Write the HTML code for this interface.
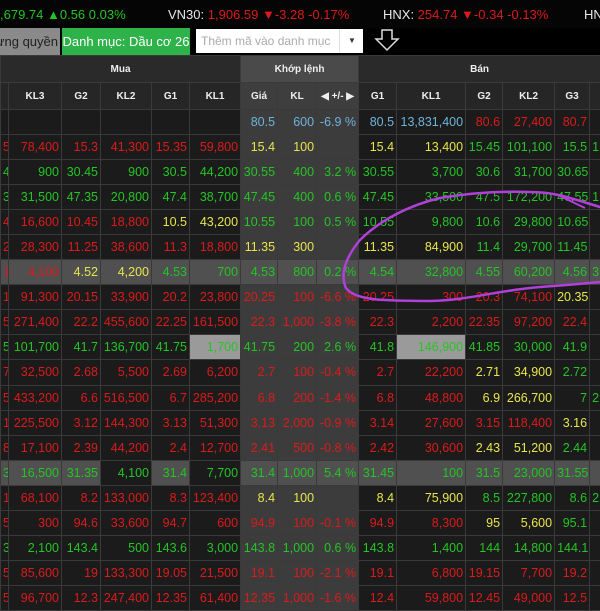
<!DOCTYPE html>
<html><head><meta charset="utf-8"><style>
*{margin:0;padding:0;box-sizing:border-box}
body{width:600px;height:600px;overflow:hidden;background:#000;font-family:"Liberation Sans",Arial,sans-serif;position:relative}
.top{position:absolute;left:0;top:0;width:600px;height:28px;background:#050505;font-size:13px;line-height:30px;white-space:nowrap}
.top span{position:absolute}
.g{color:#25c425}.r{color:#dd1a1a}.y{color:#e8e54c}.b{color:#6fb3dc}.w{color:#e8e8e8}
.bar{position:absolute;top:28px;left:0;width:600px;height:28px;background:#000}
.btn1{position:absolute;left:0;top:0;width:60px;height:27px;background:#8a8a8a;color:#222;font-size:13px;line-height:27px;white-space:nowrap;overflow:hidden}
.btn1 span{position:absolute;right:2px;top:0}
.btn2{position:absolute;left:62px;top:0;width:128px;height:27px;background:#2eb24a;color:#fff;font-size:13px;line-height:27px;text-align:center;white-space:nowrap}
.inp{position:absolute;left:196px;top:1px;width:167px;height:24px;background:#fff;color:#aaa;font-size:12px;line-height:24px;padding-left:5px;white-space:nowrap}
.inp .sep{position:absolute;left:143px;top:0;width:1px;height:24px;background:#ddd}
.inp .dd{position:absolute;left:152px;top:0;color:#333;font-size:8px}
table{position:absolute;left:0;top:55px;border-collapse:collapse;table-layout:fixed;width:600px}
td{border:1px solid #3a3a3a;height:25.05px;font-size:12.5px;text-align:right;padding:0 2px;white-space:nowrap;overflow:hidden;background:#1b1b1b}
tr.h1 td{height:27px;background:#2a2a2a;color:#eee;font-weight:bold;font-size:10px;text-align:center}
tr.h2 td{height:27px;background:#262626;color:#eee;font-weight:bold;font-size:10px;text-align:center}
td.k{background:#3c3c3c}
tr.h1 td.k{background:#4a4a4a}
tr.h2 td.k{background:#3e3e3e}
tr.hl td{background:#505050}
td.gc{background:#9a9a9a!important}
td.dk{background:#1b1b1b!important}
</style></head><body>
<div class="top">
<span class="g" style="left:0">,679.74 ▲0.56 0.03%</span>
<span style="left:168px"><span class="w" style="position:static">VN30: </span><span class="r" style="position:static">1,906.59 ▼-3.28 -0.17%</span></span>
<span style="left:383px"><span class="w" style="position:static">HNX: </span><span class="r" style="position:static">254.74 ▼-0.34 -0.13%</span></span>
<span class="w" style="left:584px">HN</span>
</div>
<div class="bar">
<div class="btn1"><span>ừng quyền</span></div>
<div class="btn2">Danh mục: Dầu cơ 26</div>
<div class="inp">Thêm mã vào danh mục<div class="sep"></div><div class="dd">▼</div></div>
<svg style="position:absolute;left:374px;top:0px" width="26" height="24" viewBox="0 0 26 24"><path d="M8 2h10v9h6l-11 11L2 11h6z" fill="none" stroke="#ddd" stroke-width="1.5"/></svg>
</div>
<table>
<colgroup><col style="width:8px"><col style="width:53px"><col style="width:39px"><col style="width:51px"><col style="width:38px"><col style="width:51px"><col style="width:37px"><col style="width:39px"><col style="width:42px"><col style="width:38px"><col style="width:69px"><col style="width:37px"><col style="width:52px"><col style="width:35px"><col style="width:11px"></colgroup>
<tr class="h1"><td colspan="6">Mua</td><td class="k" colspan="3">Khớp lệnh</td><td colspan="6">Bán</td></tr>
<tr class="h2"><td></td><td>KL3</td><td>G2</td><td>KL2</td><td>G1</td><td>KL1</td><td class="k">Giá</td><td class="k">KL</td><td class="k">◀ +/- ▶</td><td>G1</td><td>KL1</td><td>G2</td><td>KL2</td><td>G3</td><td></td></tr>
<tr><td></td><td></td><td></td><td></td><td></td><td></td><td class="k b">80.5</td><td class="k b">600</td><td class="k b">-6.9 %</td><td class="b">80.5</td><td class="b">13,831,400</td><td class="r">80.6</td><td class="r">27,400</td><td class="r">80.7</td><td></td></tr>
<tr><td class="r">5</td><td class="r">78,400</td><td class="r">15.3</td><td class="r">41,300</td><td class="r">15.35</td><td class="r">59,800</td><td class="k y">15.4</td><td class="k y">100</td><td class="k"></td><td class="y">15.4</td><td class="y">13,400</td><td class="g">15.45</td><td class="g">101,100</td><td class="g">15.5</td><td class="g">1</td></tr>
<tr class="g"><td>4</td><td>900</td><td>30.45</td><td>900</td><td>30.5</td><td>44,200</td><td class="k">30.55</td><td class="k">400</td><td class="k">3.2 %</td><td>30.55</td><td>3,700</td><td>30.6</td><td>31,700</td><td>30.65</td><td></td></tr>
<tr class="g"><td>3</td><td>31,500</td><td>47.35</td><td>20,800</td><td>47.4</td><td>38,700</td><td class="k">47.45</td><td class="k">400</td><td class="k">0.6 %</td><td>47.45</td><td>33,500</td><td>47.5</td><td>172,200</td><td>47.55</td><td>1</td></tr>
<tr><td class="r">4</td><td class="r">16,600</td><td class="r">10.45</td><td class="r">18,800</td><td class="y">10.5</td><td class="y">43,200</td><td class="k g">10.55</td><td class="k g">100</td><td class="k g">0.5 %</td><td class="g">10.55</td><td class="g">9,800</td><td class="g">10.6</td><td class="g">29,800</td><td class="g">10.65</td><td></td></tr>
<tr><td class="r">2</td><td class="r">28,300</td><td class="r">11.25</td><td class="r">38,600</td><td class="r">11.3</td><td class="r">18,800</td><td class="k y">11.35</td><td class="k y">300</td><td class="k"></td><td class="y">11.35</td><td class="y">84,900</td><td class="g">11.4</td><td class="g">29,700</td><td class="g">11.45</td><td></td></tr>
<tr class="hl g"><td class="r">1</td><td class="r">4,100</td><td class="y">4.52</td><td class="y">4,200</td><td>4.53</td><td>700</td><td>4.53</td><td>800</td><td>0.2 %</td><td>4.54</td><td>32,800</td><td>4.55</td><td>60,200</td><td>4.56</td><td>3</td></tr>
<tr class="r"><td>1</td><td>91,300</td><td>20.15</td><td>33,900</td><td>20.2</td><td>23,800</td><td class="k">20.25</td><td class="k">100</td><td class="k">-6.6 %</td><td>20.25</td><td>300</td><td>20.3</td><td>74,100</td><td class="y">20.35</td><td></td></tr>
<tr class="r"><td>5</td><td>271,400</td><td>22.2</td><td>455,600</td><td>22.25</td><td>161,500</td><td class="k">22.3</td><td class="k">1,000</td><td class="k">-3.8 %</td><td>22.3</td><td>2,200</td><td>22.35</td><td>97,200</td><td>22.4</td><td></td></tr>
<tr class="g"><td>5</td><td>101,700</td><td>41.7</td><td>136,700</td><td>41.75</td><td class="gc">1,700</td><td class="k">41.75</td><td class="k">200</td><td class="k">2.6 %</td><td>41.8</td><td class="gc">146,900</td><td>41.85</td><td>30,000</td><td>41.9</td><td></td></tr>
<tr class="r"><td>7</td><td>32,500</td><td>2.68</td><td>5,500</td><td>2.69</td><td>6,200</td><td class="k">2.7</td><td class="k">100</td><td class="k">-0.4 %</td><td>2.7</td><td>22,200</td><td class="y">2.71</td><td class="y">34,900</td><td class="g">2.72</td><td></td></tr>
<tr class="r"><td>5</td><td>433,200</td><td>6.6</td><td>516,500</td><td>6.7</td><td>285,200</td><td class="k">6.8</td><td class="k">200</td><td class="k">-1.4 %</td><td>6.8</td><td>48,800</td><td class="y">6.9</td><td class="y">266,700</td><td class="g">7</td><td class="g">2</td></tr>
<tr class="r"><td>1</td><td>225,500</td><td>3.12</td><td>144,300</td><td>3.13</td><td>51,300</td><td class="k">3.13</td><td class="k">2,000</td><td class="k">-0.9 %</td><td>3.14</td><td>27,600</td><td>3.15</td><td>118,400</td><td class="y">3.16</td><td></td></tr>
<tr class="r"><td>8</td><td>17,100</td><td>2.39</td><td>44,200</td><td>2.4</td><td>12,700</td><td class="k">2.41</td><td class="k">500</td><td class="k">-0.8 %</td><td>2.42</td><td>30,600</td><td class="y">2.43</td><td class="y">51,200</td><td class="g">2.44</td><td></td></tr>
<tr class="hl g"><td>3</td><td>16,500</td><td>31.35</td><td class="dk">4,100</td><td>31.4</td><td class="dk">7,700</td><td>31.4</td><td>1,000</td><td>5.4 %</td><td>31.45</td><td>100</td><td>31.5</td><td>23,000</td><td>31.55</td><td></td></tr>
<tr class="r"><td>1</td><td>68,100</td><td>8.2</td><td>133,000</td><td>8.3</td><td>123,400</td><td class="k y">8.4</td><td class="k y">100</td><td class="k"></td><td class="y">8.4</td><td class="y">75,900</td><td class="g">8.5</td><td class="g">227,800</td><td class="g">8.6</td><td class="g">2</td></tr>
<tr class="r"><td>5</td><td>300</td><td>94.6</td><td>33,600</td><td>94.7</td><td>600</td><td class="k">94.9</td><td class="k">100</td><td class="k">-0.1 %</td><td>94.9</td><td>8,300</td><td class="y">95</td><td class="y">5,600</td><td class="g">95.1</td><td></td></tr>
<tr class="g"><td>3</td><td>2,100</td><td>143.4</td><td>500</td><td>143.6</td><td>3,000</td><td class="k">143.8</td><td class="k">1,000</td><td class="k">0.6 %</td><td>143.8</td><td>1,400</td><td>144</td><td>14,800</td><td>144.1</td><td></td></tr>
<tr class="r"><td>5</td><td>85,600</td><td>19</td><td>133,300</td><td>19.05</td><td>21,500</td><td class="k">19.1</td><td class="k">100</td><td class="k">-2.1 %</td><td>19.1</td><td>6,800</td><td>19.15</td><td>7,700</td><td>19.2</td><td></td></tr>
<tr class="r"><td>5</td><td>96,700</td><td>12.3</td><td>247,400</td><td>12.35</td><td>61,400</td><td class="k">12.35</td><td class="k">1,000</td><td class="k">-1.6 %</td><td>12.4</td><td>59,800</td><td>12.45</td><td>49,000</td><td>12.5</td><td></td></tr>
</table>
<svg style="position:absolute;left:0;top:0" width="600" height="600"><path d="M600 207C570 198 555 192 530 192C500 191 470 193 440 198C410 205 380 220 360 240C345 258 340 275 346 288C355 300 380 301 430 301C470 300 500 290 540 287C570 285 590 283 600 282" fill="none" stroke="#b040d8" stroke-width="2.5" stroke-linecap="round"/><path d="M560 196L585 208" stroke="#b040d8" stroke-width="2" fill="none"/></svg>
</body></html>
